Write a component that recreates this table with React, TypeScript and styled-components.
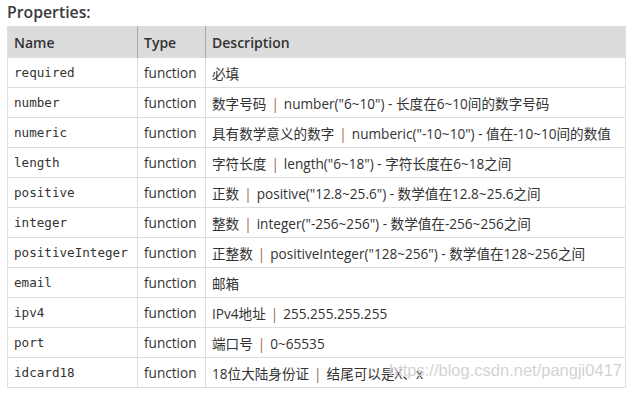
import styled, { createGlobalStyle } from 'styled-components';

const GlobalStyle = createGlobalStyle`
  body {
    margin: 0;
    background: #fff;
    font-family: 'Open Sans', 'Noto Sans CJK SC', sans-serif;
    color: #333;
  }
`;

const Page = styled.div`
  position: relative;
  padding: 1px 8px 0 7px;
  width: 633px;
  height: 394px;
  box-sizing: border-box;
  overflow: hidden;
`;

const Title = styled.h3`
  margin: 0 0 2px;
  font-size: 15.8px;
  font-weight: 600;
  line-height: 23px;
  color: #3a3a3a;
`;

const Table = styled.table`
  border-collapse: collapse;
  width: 619px;
  border: 1px solid #ddd;
  font-size: 13.6px;
`;

const Head = styled.th<{ width?: number }>`
  background: #dcdcdc;
  text-align: left;
  font-weight: 600;
  font-size: 14px;
  height: 30px;
  padding: 0 6px;
  color: #333;
  border-left: 1px solid #aaa;
  &:first-child {
    border-left: none;
  }
  ${({ width }) => (width ? `width: ${width}px;` : '')}
`;

const Row = styled.tr`
  border-top: 1px solid #ddd;
  height: 30px;
`;

const Cell = styled.td`
  padding: 0 6px;
  border-left: 1px solid #ddd;
  white-space: nowrap;
  color: #333;
`;

const Code = styled(Cell)`
  font-family: 'DejaVu Sans Mono', monospace;
  font-size: 12.6px;
`;

const Sep = styled.span`
  color: #9a6848;
  margin: 0 5px;
`;

const Watermark = styled.span`
  position: absolute;
  right: 11px;
  top: 361px;
  font-family: 'Liberation Sans', Arial, sans-serif;
  font-size: 16.5px;
  color: rgba(195, 195, 195, 0.75);
  text-shadow: 0 0 1px rgba(255, 255, 255, 0.8);
  pointer-events: none;
`;

const rows: [string, string[]][] = [
  ['required', ['必填']],
  ['number', ['数字号码', 'number("6~10") - 长度在6~10间的数字号码']],
  ['numeric', ['具有数学意义的数字', 'numberic("-10~10") - 值在-10~10间的数值']],
  ['length', ['字符长度', 'length("6~18") - 字符长度在6~18之间']],
  ['positive', ['正数', 'positive("12.8~25.6") - 数学值在12.8~25.6之间']],
  ['integer', ['整数', 'integer("-256~256") - 数学值在-256~256之间']],
  ['positiveInteger', ['正整数', 'positiveInteger("128~256") - 数学值在128~256之间']],
  ['email', ['邮箱']],
  ['ipv4', ['IPv4地址', '255.255.255.255']],
  ['port', ['端口号', '0~65535']],
  ['idcard18', ['18位大陆身份证', '结尾可以是X、x']],
];

export default function App() {
  return (
    <Page>
      <GlobalStyle />
      <Title>Properties:</Title>
      <Table>
        <thead>
          <tr>
            <Head width={117}>Name</Head>
            <Head width={55}>Type</Head>
            <Head>Description</Head>
          </tr>
        </thead>
        <tbody>
          {rows.map(([name, desc]) => (
            <Row key={name}>
              <Code>{name}</Code>
              <Cell>function</Cell>
              <Cell>
                {desc[0]}
                {desc[1] && (
                  <>
                    <Sep>|</Sep>
                    {desc[1]}
                  </>
                )}
              </Cell>
            </Row>
          ))}
        </tbody>
      </Table>
      <Watermark>https://blog.csdn.net/pangji0417</Watermark>
    </Page>
  );
}
